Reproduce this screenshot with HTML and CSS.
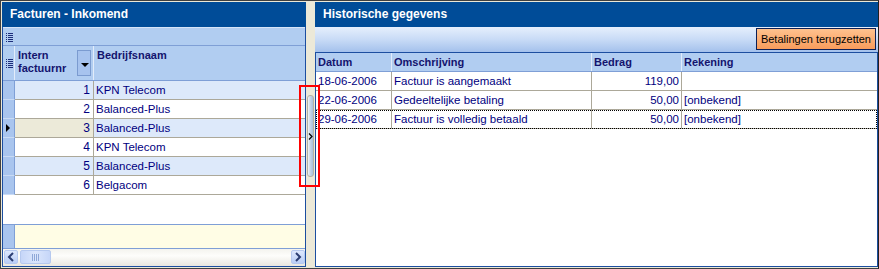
FILE: index.html
```html
<!DOCTYPE html>
<html lang="nl">
<head>
    <meta charset="UTF-8">
    <title>Facturen - Inkomend</title>
    <link rel="stylesheet" href="styles.css">
</head>
<body>
    <div class="frame">
        <div class="panel left-panel">
            <div class="title">Facturen - Inkomend</div>
            <div class="group-bar"><span class="grid-icon"></span></div>
            <div class="lgrid-head">
                <div class="sel-head"><span class="grid-icon"></span></div>
                <div class="col-nr head-cell">
                    <span>Intern<br>factuurnr</span>
                    <span class="drop-btn"></span>
                </div>
                <div class="col-name head-cell">Bedrijfsnaam</div>
            </div>
            <div class="lrow alt"><div class="sel"></div><div class="col-nr num">1</div><div class="col-name">KPN Telecom</div></div>
            <div class="lrow"><div class="sel"></div><div class="col-nr num">2</div><div class="col-name">Balanced-Plus</div></div>
            <div class="lrow alt current"><div class="sel"><span class="arrow"></span></div><div class="col-nr num">3</div><div class="col-name">Balanced-Plus</div></div>
            <div class="lrow"><div class="sel"></div><div class="col-nr num">4</div><div class="col-name">KPN Telecom</div></div>
            <div class="lrow alt"><div class="sel"></div><div class="col-nr num">5</div><div class="col-name">Balanced-Plus</div></div>
            <div class="lrow"><div class="sel"></div><div class="col-nr num">6</div><div class="col-name">Belgacom</div></div>
            <div class="lgrid-empty"></div>
            <div class="summary"><div class="sel"></div><div class="summary-fill"></div></div>
            <div class="hscroll">
                <div class="sb-btn">
                    <svg width="8" height="10" viewBox="0 0 8 10"><path d="M6 1 L2 5 L6 9" fill="none" stroke="#2c3e73" stroke-width="2"/></svg>
                </div>
                <div class="sb-thumb">
                    <svg width="8" height="7" viewBox="0 0 8 7"><path d="M0.5 0V7M2.5 0V7M4.5 0V7M6.5 0V7" stroke="#8fa8d8" stroke-width="1"/></svg>
                </div>
                <div class="sb-track"></div>
                <div class="sb-btn">
                    <svg width="8" height="10" viewBox="0 0 8 10"><path d="M2 1 L6 5 L2 9" fill="none" stroke="#2c3e73" stroke-width="2"/></svg>
                </div>
            </div>
        </div>

        <div class="splitter">
            <div class="split-btn">
                <svg width="5" height="7" viewBox="0 0 5 7"><path d="M1 0.5 L4 3.5 L1 6.5" fill="none" stroke="#000" stroke-width="1.2"/></svg>
            </div>
            <div class="highlight"></div>
        </div>

        <div class="panel right-panel">
            <div class="title">Historische gegevens</div>
            <div class="toolbar">
                <button class="reset-btn">Betalingen terugzetten</button>
            </div>
            <div class="rgrid">
                <div class="rrow rhead">
                    <div class="c-date">Datum</div>
                    <div class="c-desc">Omschrijving</div>
                    <div class="c-amt">Bedrag</div>
                    <div class="c-acc">Rekening</div>
                </div>
                <div class="rrow">
                    <div class="c-date">18-06-2006</div>
                    <div class="c-desc">Factuur is aangemaakt</div>
                    <div class="c-amt num">119,00</div>
                    <div class="c-acc"></div>
                </div>
                <div class="rrow">
                    <div class="c-date">22-06-2006</div>
                    <div class="c-desc">Gedeeltelijke betaling</div>
                    <div class="c-amt num">50,00</div>
                    <div class="c-acc">[onbekend]</div>
                </div>
                <div class="rrow focus">
                    <div class="c-date">29-06-2006</div>
                    <div class="c-desc">Factuur is volledig betaald</div>
                    <div class="c-amt num">50,00</div>
                    <div class="c-acc">[onbekend]</div>
                </div>
            </div>
        </div>
    </div>
</body>
</html>
```

FILE: styles.css
```css
body {
    margin: 0;
    font-family: "Liberation Sans", Arial, sans-serif;
    font-size: 11px;
    background: #ece9d8;
}

.frame {
    width: 879px;
    height: 269px;
    box-sizing: border-box;
    border: 1px solid #404040;
    border-right-color: #202020;
    padding: 1px 0 1px 1px;
    background: #ece9d8;
    display: flex;
}

.panel {
    display: flex;
    flex-direction: column;
    box-sizing: border-box;
    height: 265px;
    border: 1px solid #1c4ea0;
    border-top: none;
    background: #fff;
}

.left-panel {
    width: 304px;
}

.right-panel {
    width: 563px;
}

.title {
    height: 25px;
    margin: 0 -1px;
    background: #004c98;
    color: #fff;
    font-weight: bold;
    font-size: 12px;
    line-height: 24px;
    padding-left: 8px;
    flex-shrink: 0;
}

.grid-icon {
    display: block;
    width: 7px;
    height: 9px;
    background:
        linear-gradient(#1d2d7a, #1d2d7a) 0 0 / 1px 1px no-repeat,
        linear-gradient(#1d2d7a, #1d2d7a) 2px 0 / 5px 1px no-repeat,
        linear-gradient(#1d2d7a, #1d2d7a) 0 2px / 1px 1px no-repeat,
        linear-gradient(#1d2d7a, #1d2d7a) 2px 2px / 5px 1px no-repeat,
        linear-gradient(#1d2d7a, #1d2d7a) 0 4px / 1px 1px no-repeat,
        linear-gradient(#1d2d7a, #1d2d7a) 2px 4px / 5px 1px no-repeat,
        linear-gradient(#1d2d7a, #1d2d7a) 0 6px / 1px 1px no-repeat,
        linear-gradient(#1d2d7a, #1d2d7a) 2px 6px / 5px 1px no-repeat,
        linear-gradient(#1d2d7a, #1d2d7a) 0 8px / 1px 1px no-repeat,
        linear-gradient(#1d2d7a, #1d2d7a) 2px 8px / 5px 1px no-repeat;
}

.group-bar {
    height: 19px;
    box-sizing: border-box;
    background: #b1cdf1;
    border-top: 1px solid #d6e4f8;
    border-bottom: 1px solid #7f9fd6;
    padding: 5px 0 0 3px;
    flex-shrink: 0;
}

.lgrid-head {
    display: flex;
    height: 35px;
    box-sizing: border-box;
    background: #b1cdf1;
    border-bottom: 1px solid #7f9fd6;
    flex-shrink: 0;
}

.sel-head {
    width: 12px;
    box-sizing: border-box;
    padding: 13px 0 0 3px;
    border-right: 1px solid #e2ecfa;
}

.head-cell {
    font-weight: bold;
    color: #14146e;
    padding: 3px 0 0 3px;
    line-height: 13px;
}

.lgrid-head .col-nr {
    display: flex;
    justify-content: space-between;
    border-right: 1px solid #e2ecfa;
    padding-right: 2px;
}

.drop-btn {
    width: 14px;
    height: 26px;
    margin-top: 1px;
    box-sizing: border-box;
    border: 1px solid #7b9bd0;
    background: #a7c3ee;
    position: relative;
}

.drop-btn::after {
    content: "";
    position: absolute;
    left: 3px;
    top: 12px;
    border-left: 4px solid transparent;
    border-right: 4px solid transparent;
    border-top: 4px solid #000;
}

.col-nr {
    width: 79px;
    box-sizing: border-box;
}

.col-name {
    flex: 1;
}

.lrow {
    display: flex;
    height: 19px;
    box-sizing: border-box;
    border-bottom: 1px solid #aca899;
    color: #000080;
    line-height: 18px;
    flex-shrink: 0;
}

.lrow.alt {
    background: #dde9fa;
}

.lrow .sel,
.summary .sel {
    width: 12px;
    box-sizing: border-box;
    background: #a9c5ee;
    border-right: 1px solid #7f9fd6;
    border-bottom: 1px solid #c9dbf5;
    margin-bottom: -1px;
    position: relative;
}

.lrow .col-nr {
    border-right: 1px solid #aca899;
    text-align: right;
    padding-right: 3px;
    font-size: 12px;
}

.lrow .col-name {
    padding-left: 2px;
    font-size: 11.5px;
}

.lrow.current .col-nr {
    background: #ecead9;
}

.arrow {
    position: absolute;
    left: 3px;
    top: 5px;
    border-top: 4px solid transparent;
    border-bottom: 4px solid transparent;
    border-left: 4px solid #000;
}

.lgrid-empty {
    flex: 1;
    background: #fff;
}

.summary {
    display: flex;
    height: 25px;
    box-sizing: border-box;
    border-top: 1px solid #7f9fd6;
    border-bottom: 1px solid #7f9fd6;
    flex-shrink: 0;
}

.summary .sel {
    margin-bottom: 0;
    border-bottom: none;
}

.summary-fill {
    flex: 1;
    background: #fffde5;
}

.hscroll {
    display: flex;
    height: 16px;
    background: linear-gradient(#f4f3ee, #fdfdfb 40%, #e9e7df);
    padding: 1px 0 0 1px;
    gap: 2px;
    flex-shrink: 0;
}

.sb-btn {
    width: 14px;
    height: 14px;
    box-sizing: border-box;
    border: 1px solid #b6c9ef;
    border-radius: 2px;
    background: linear-gradient(#dde8fd, #b9cdf6);
    display: flex;
    align-items: center;
    justify-content: center;
}

.sb-thumb {
    width: 31px;
    height: 14px;
    box-sizing: border-box;
    border: 1px solid #b6c9ef;
    border-radius: 2px;
    background: linear-gradient(90deg, #c6d6f8, #dbe6fc 50%, #c6d6f8);
    display: flex;
    align-items: center;
    justify-content: center;
}

.sb-track {
    flex: 1;
}

.splitter {
    width: 9px;
    height: 265px;
    position: relative;
    flex-shrink: 0;
}

.split-btn {
    position: absolute;
    left: 1px;
    top: 93px;
    width: 7px;
    height: 82px;
    box-sizing: border-box;
    border: 1px solid #b4b1a2;
    border-radius: 3px;
    background: linear-gradient(90deg, #f7f7f4, #c8d7ea 40%, #a8bfd9);
    display: flex;
    align-items: center;
    justify-content: center;
}

.highlight {
    position: absolute;
    left: -7px;
    top: 83px;
    width: 21px;
    height: 102px;
    box-sizing: border-box;
    border: 2px solid #f00;
}

.toolbar {
    height: 25px;
    box-sizing: border-box;
    margin: 0 -1px;
    background: linear-gradient(#e6effc, #c8dbf6 50%, #a4c1ec);
    display: flex;
    justify-content: flex-end;
    align-items: flex-start;
    padding: 1px 2px 0 0;
    flex-shrink: 0;
}

.reset-btn {
    height: 22px;
    box-sizing: border-box;
    border: 1px solid #0c1f55;
    background: linear-gradient(#ffc28e, #f89c5c);
    font-family: "Liberation Sans", Arial, sans-serif;
    font-size: 11px;
    color: #000;
    padding: 0 4px;
}

.rgrid {
    flex: 1;
    border-top: 1px solid #1c4ea0;
}

.rrow {
    display: flex;
    height: 19px;
    box-sizing: border-box;
    border-bottom: 1px solid #aca899;
    color: #000080;
    line-height: 18px;
    font-size: 11.5px;
}

.rrow > div {
    box-sizing: border-box;
    padding-left: 2px;
    border-right: 1px solid #aca899;
}

.rrow > div:last-child {
    border-right: none;
}

.rhead {
    background: #b1cdf1;
    border-bottom: 1px solid #7f9fd6;
    font-weight: bold;
    font-size: 11px;
    color: #14146e;
}

.rhead > div {
    border-right: 1px solid #e2ecfa;
}

.c-date {
    width: 76px;
}

.c-desc {
    width: 200px;
}

.c-amt {
    width: 90px;
}

.c-acc {
    flex: 1;
}

.num {
    text-align: right;
    padding-right: 2px;
}

.rrow .num {
    padding-right: 2px;
}

.rrow.focus {
    outline: 1px dotted #000;
    outline-offset: -1px;
}
```
